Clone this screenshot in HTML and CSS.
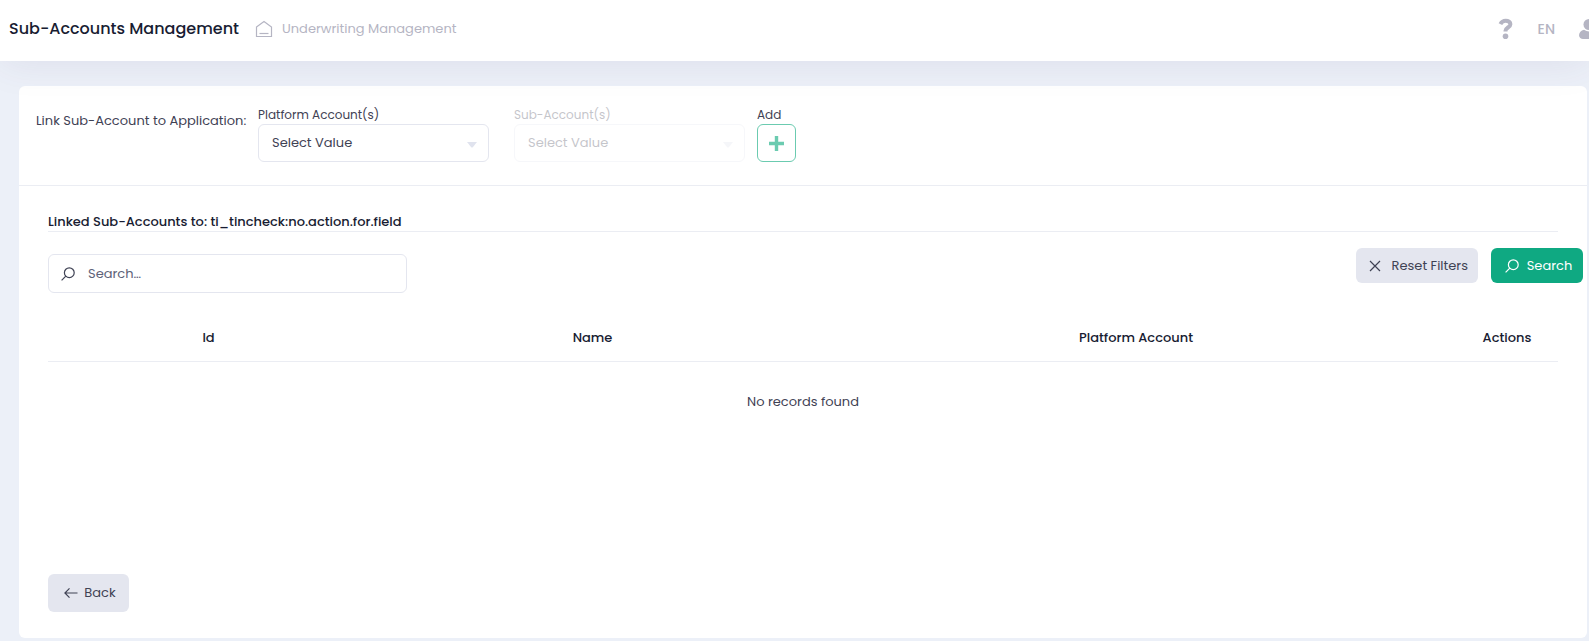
FILE: index.html
```html
<!DOCTYPE html>
<html lang="en">
<head>
<meta charset="utf-8">
<meta name="viewport" content="width=device-width, initial-scale=1">
<title>Sub-Accounts Management</title>
<link rel="stylesheet" href="styles.css">
</head>
<body>
<header class="header">
  <h1 class="page-title">Sub-Accounts Management</h1>
  <nav class="breadcrumb" aria-label="Breadcrumb">
    <a class="crumb" href="#" aria-label="Home">
      <svg class="home-icon" width="18" height="18" viewBox="0 0 18 18" fill="none" stroke="currentColor" stroke-width="1.200"><path d="M1.500 7 9 1.500 16.500 7v9.500h-15z"/><path d="M4.500 13.500h9"/></svg>
    </a>
    <a class="crumb" href="#">Underwriting Management</a>
  </nav>
  <div class="topbar">
    <button class="top-button" type="button" aria-label="Help">
      <svg width="16" height="22" viewBox="0 0 16 22"><path d="M2.400 6.100C3.600 3.700 5.300 2.700 7.700 2.700c2.700 0 4.700 1.400 4.700 3.500 0 3.300-4.900 3.300-4.900 6.600v.8" fill="none" stroke="currentColor" stroke-width="4"/><circle cx="7.500" cy="18.300" r="2.800" fill="currentColor"/></svg>
    </button>
    <button class="top-button language" type="button">EN</button>
    <button class="top-button user" type="button" aria-label="Account">
      <svg width="20" height="20" viewBox="0 0 20 20" fill="currentColor"><circle cx="10" cy="5.500" r="5.500"/><path d="M5 10.800Q10 14 15 10.800c3 .8 5 3 5 5.400 0 2-2 3.800-4 3.800H4c-2 0-4-1.800-4-3.800 0-2.400 2-4.600 5-5.400z"/></svg>
    </button>
  </div>
</header>
<main class="card">
  <form class="link-form">
    <span class="form-title">Link Sub-Account to Application:</span>
    <div class="field">
      <label for="platform">Platform Account(s)</label>
      <select class="select" id="platform"><option>Select Value</option></select>
    </div>
    <div class="field field-disabled">
      <label for="sub">Sub-Account(s)</label>
      <select class="select" id="sub" disabled><option>Select Value</option></select>
    </div>
    <div class="field">
      <label for="add">Add</label>
      <button class="add-button" id="add" type="button">
        <svg width="15" height="15" viewBox="0 0 15 15" fill="none" stroke="currentColor" stroke-width="3.400" stroke-linecap="butt"><path d="M7.500 0v15M0 7.500h15"/></svg>
      </button>
    </div>
  </form>
  <section class="linked">
    <h2 class="section-title">Linked Sub-Accounts to: ti_tincheck:no.action.for.field</h2>
    <div class="toolbar">
      <div class="search-box">
        <svg width="14" height="14" viewBox="0 0 14 14" fill="none" stroke="currentColor" stroke-width="1.200"><circle cx="8.300" cy="5.700" r="4.900"/><path d="M4.800 9.200.6 13.400"/></svg>
        <input type="text" placeholder="Search…" aria-label="Search">
      </div>
      <div class="actions">
        <button class="button" type="button">
          <svg width="12" height="12" viewBox="0 0 12 12" fill="none" stroke="currentColor" stroke-width="1.200"><path d="m1 1 10 10M11 1 1 11"/></svg>Reset Filters
        </button>
        <button class="button button-primary" type="button">
          <svg width="14" height="14" viewBox="0 0 14 14" fill="none" stroke="currentColor" stroke-width="1.200"><circle cx="8.300" cy="5.700" r="4.900"/><path d="M4.800 9.200.6 13.400"/></svg>Search
        </button>
      </div>
    </div>
    <table class="table">
      <colgroup><col class="col-id"><col class="col-name"><col class="col-platform"><col class="col-actions"></colgroup>
      <thead><tr><th>Id</th><th>Name</th><th>Platform Account</th><th>Actions</th></tr></thead>
      <tbody><tr><td colspan="4">No records found</td></tr></tbody>
    </table>
    <button class="button button-back" type="button">
      <svg width="14" height="12" viewBox="0 0 14 12" fill="none" stroke="currentColor" stroke-width="1.200"><path d="M13.500 6H1M5.500 1.300.9 6l4.600 4.700"/></svg>Back
    </button>
  </section>
</main>
</body>
</html>
```
FILE: styles.css
```css
* {
  box-sizing: border-box;
}

body {
  margin: 0;
  min-height: 100vh;
  overflow-x: hidden;
  background: #ecf0f8;
  color: #3f4254;
  font: 400 13px/20px Poppins, Inter, sans-serif;
}

button,
input,
select {
  font: inherit;
  color: inherit;
}

button {
  cursor: pointer;
}

svg {
  flex: none;
}

.header {
  position: relative;
  z-index: 1;
  display: flex;
  align-items: center;
  height: 61px;
  padding: 0 0 4px 9px;
  background: #fff;
  box-shadow: 0 0 40px rgba(82, 63, 105, 0.1);
}

.page-title {
  margin: 0;
  color: #181c32;
  font-size: 16px;
  font-weight: 500;
  white-space: nowrap;
}

.breadcrumb {
  display: flex;
  align-items: center;
  gap: 9px;
  margin-left: 16px;
}

.crumb {
  color: #b5b5c3;
  text-decoration: none;
  white-space: nowrap;
}

.home-icon {
  display: block;
}

.topbar {
  display: flex;
  align-items: center;
  gap: 24px;
  margin-left: auto;
  margin-right: -10px;
}

.top-button {
  display: flex;
  padding: 0;
  border: 0;
  background: none;
  color: #b5b5c3;
}

.language {
  font-size: 14px;
  font-weight: 500;
}

.card {
  margin: 25px 2px 3px 19px;
  border-radius: 6px;
  background: #fff;
}

.link-form {
  display: flex;
  padding: 19px 17px 23px;
  border-bottom: 1px solid #ebedf3;
}

.form-title {
  width: 222px;
  padding-top: 6px;
  white-space: nowrap;
}

.field {
  display: flex;
  flex-direction: column;
  margin-right: 12px;
}

.field label {
  font-size: 12px;
  line-height: 19px;
}

.field-disabled {
  margin-left: 13px;
  opacity: 0.3;
}

.select {
  width: 231px;
  height: 38px;
  padding: 0 13px 1px;
  border: 1px solid #e4e6ef;
  border-radius: 6px;
  appearance: none;
  background: #fff url("data:image/svg+xml,%3Csvg xmlns='http://www.w3.org/2000/svg' width='10' height='6'%3E%3Cpath d='M0 0h10L6 5q-1 1-2 0z' fill='%23e0e3ee'/%3E%3C/svg%3E") no-repeat right 11px top 17px;
  opacity: 1;
}

.add-button {
  display: grid;
  place-items: center;
  width: 39px;
  height: 38px;
  padding: 0;
  border: 1px solid #6bcbb0;
  border-radius: 6px;
  background: #fff;
  color: #6bcbb0;
}

.linked {
  padding: 27px 29px 26px;
}

.section-title {
  margin: 0;
  border-bottom: 1px solid #ebedf3;
  color: #181c32;
  font-size: 13px;
  font-weight: 500;
  line-height: 18px;
}

.toolbar {
  display: flex;
  align-items: flex-start;
  justify-content: space-between;
  margin: 16px -25px 0 0;
}

.search-box {
  display: flex;
  align-items: center;
  gap: 13px;
  width: 359px;
  height: 39px;
  margin-top: 6px;
  padding: 0 12px;
  border: 1px solid #e4e6ef;
  border-radius: 6px;
}

.search-box input {
  flex: 1;
  min-width: 0;
  padding: 0;
  border: 0;
  outline: 0;
  background: none;
}

.search-box input::placeholder {
  color: #5e6278;
}

.actions {
  display: flex;
  gap: 13px;
}

.button {
  display: flex;
  align-items: center;
  justify-content: center;
  gap: 11px;
  min-width: 92px;
  height: 35px;
  padding: 0 10px 0 13px;
  border: 0;
  border-radius: 6px;
  background: #e4e6ef;
  white-space: nowrap;
}

.button-primary {
  gap: 8px;
  background: #0fa982;
  color: #fff;
}

.button-back {
  gap: 6px;
  min-width: 81px;
  height: 38px;
}

.table {
  width: 100%;
  margin-bottom: 142px;
  border-collapse: collapse;
  table-layout: fixed;
  text-align: center;
}

.col-id {
  width: 321px;
}

.col-name {
  width: 447px;
}

.col-platform {
  width: auto;
}

.col-actions {
  width: 102px;
}

.table th {
  padding: 35px 0 13px;
  border-bottom: 1px solid #ebedf3;
  color: #181c32;
  font-size: 13px;
  font-weight: 500;
}

.table td {
  padding: 30px 0 20px;
}
```
